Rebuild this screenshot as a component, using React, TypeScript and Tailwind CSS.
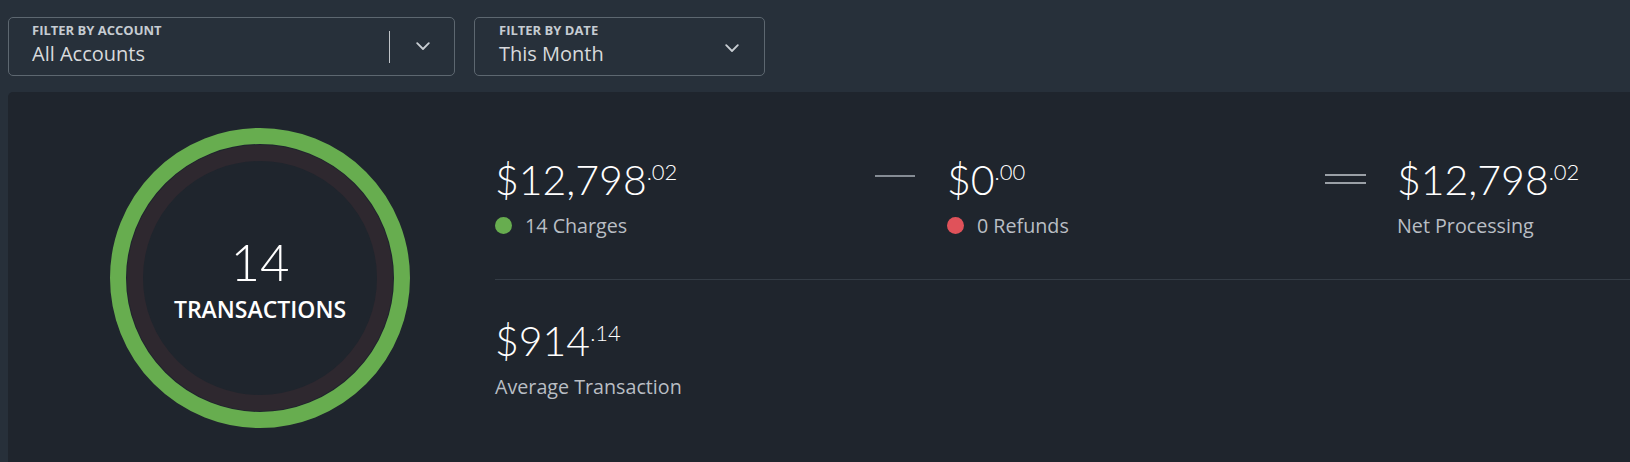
import React from "react";

const sans = "font-['Open_Sans',sans-serif]";
const light = "font-['Lato',sans-serif] font-light";

function Chevron() {
  return (
    <svg width="14" height="9" viewBox="0 0 14 9" fill="none">
      <polyline
        points="1.2,1.2 7,7 12.8,1.2"
        stroke="#c9ced3"
        strokeWidth="1.8"
        strokeLinecap="round"
        strokeLinejoin="round"
      />
    </svg>
  );
}

function Amount({ whole, cents }: { whole: string; cents: string }) {
  return (
    <div className="flex items-start text-white">
      <span className={`${light} text-[41px] leading-none`}>{whole}</span>
      <span className={`${light} mt-[2px] text-[22px] leading-none`}>.{cents}</span>
    </div>
  );
}

function Stat({
  whole,
  cents,
  label,
  dot,
}: {
  whole: string;
  cents: string;
  label: string;
  dot?: string;
}) {
  return (
    <div>
      <Amount whole={whole} cents={cents} />
      <div className="mt-[15.5px] flex items-center gap-[13px]">
        {dot && <span className={`h-[17px] w-[17px] rounded-full ${dot}`} />}
        <span className={`${sans} text-[19.7px] leading-none text-[#b9bec4]`}>{label}</span>
      </div>
    </div>
  );
}

export default function App() {
  return (
    <div className="flex min-h-screen flex-col bg-[#27303a]">
      <div className="flex gap-[19px] pl-2 pt-[17px] pb-[16px]">
        <div className="flex h-[59px] w-[447px] items-center rounded-[5px] border border-[#5d6770] pl-[23px] pr-[24px]">
          <div className="flex flex-1 flex-col gap-[6.5px] self-stretch pt-[6px]">
            <span className={`${sans} text-[13px] font-bold leading-none text-[#c6ccd2]`}>
              FILTER BY ACCOUNT
            </span>
            <span className={`${sans} text-[20px] leading-none text-[#d8dadc]`}>All Accounts</span>
          </div>
          <div className="h-[32px] w-px bg-[#c0c4c8]" />
          <div className="ml-[26px] flex">
            <Chevron />
          </div>
        </div>
        <div className="flex h-[59px] w-[291px] items-center rounded-[5px] border border-[#5d6770] pl-[24px] pr-[25px]">
          <div className="flex flex-1 flex-col gap-[6.5px] self-stretch pt-[6px]">
            <span className={`${sans} text-[13px] font-bold leading-none text-[#c6ccd2]`}>
              FILTER BY DATE
            </span>
            <span className={`${sans} text-[20px] leading-none text-[#d8dadc]`}>This Month</span>
          </div>
          <div className="mt-[3px] flex">
            <Chevron />
          </div>
        </div>
      </div>

      <div className="ml-2 flex flex-1 items-start rounded-tl-[5px] bg-[#1f252d] pl-[102px] pt-[36px]">
        <div className="relative h-[300px] w-[300px] shrink-0">
          <svg width="300" height="300" viewBox="0 0 300 300" className="absolute inset-0">
            <circle cx="150" cy="150" r="142" fill="none" stroke="#67ad4f" strokeWidth="16" />
            <circle cx="150" cy="150" r="125" fill="none" stroke="#2e282f" strokeWidth="16" />
          </svg>
          <div className="absolute inset-0 flex flex-col items-center justify-center gap-[11px] text-white">
            <span className={`${light} text-[51px] leading-none`}>14</span>
            <span className={`${sans} text-[23px] font-semibold leading-none`}>TRANSACTIONS</span>
          </div>
        </div>

        <div className="ml-[85px] mt-[31px] flex-1">
          <div className="flex">
            <div className="w-[380px]">
              <Stat whole="$12,798" cents="02" label="14 Charges" dot="bg-[#67ad4f]" />
            </div>
            <div className="w-[72px] pt-[16px]">
              <div className="h-[2px] w-[40px] bg-[#858c94]" />
            </div>
            <div className="w-[378px]">
              <Stat whole="$0" cents="00" label="0 Refunds" dot="bg-[#e0525a]" />
            </div>
            <div className="w-[72px] pt-[15px]">
              <div className="flex flex-col gap-[6px]">
                <div className="h-[2px] w-[41px] bg-[#9aa0a6]" />
                <div className="h-[2px] w-[41px] bg-[#9aa0a6]" />
              </div>
            </div>
            <div>
              <Stat whole="$12,798" cents="02" label="Net Processing" />
            </div>
          </div>
          <div className="mt-[44px] h-px bg-[#343c45]" />
          <div className="mt-[40px]">
            <Stat whole="$914" cents="14" label="Average Transaction" />
          </div>
        </div>
      </div>
    </div>
  );
}
